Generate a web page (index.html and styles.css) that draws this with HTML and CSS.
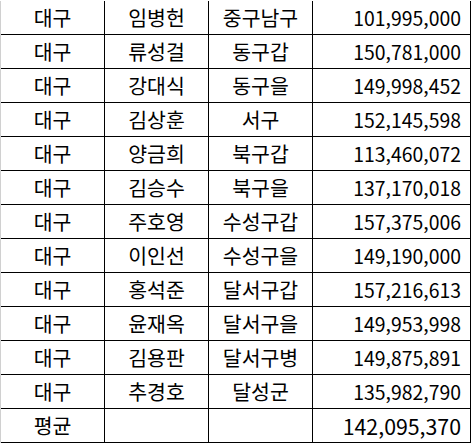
FILE: index.html
```html
<!DOCTYPE html>
<html lang="ko">
<head>
<meta charset="utf-8">
<link rel="stylesheet" href="styles.css">
</head>
<body>
<div class="sheet">
  <div class="c">대구</div><div class="c">임병헌</div><div class="c">중구남구</div><div class="n">101,995,000</div>
  <div class="c">대구</div><div class="c">류성걸</div><div class="c">동구갑</div><div class="n">150,781,000</div>
  <div class="c">대구</div><div class="c">강대식</div><div class="c">동구을</div><div class="n">149,998,452</div>
  <div class="c">대구</div><div class="c">김상훈</div><div class="c">서구</div><div class="n">152,145,598</div>
  <div class="c">대구</div><div class="c">양금희</div><div class="c">북구갑</div><div class="n">113,460,072</div>
  <div class="c">대구</div><div class="c">김승수</div><div class="c">북구을</div><div class="n">137,170,018</div>
  <div class="c">대구</div><div class="c">주호영</div><div class="c">수성구갑</div><div class="n">157,375,006</div>
  <div class="c">대구</div><div class="c">이인선</div><div class="c">수성구을</div><div class="n">149,190,000</div>
  <div class="c">대구</div><div class="c">홍석준</div><div class="c">달서구갑</div><div class="n">157,216,613</div>
  <div class="c">대구</div><div class="c">윤재옥</div><div class="c">달서구을</div><div class="n">149,953,998</div>
  <div class="c">대구</div><div class="c">김용판</div><div class="c">달서구병</div><div class="n">149,875,891</div>
  <div class="c">대구</div><div class="c">추경호</div><div class="c">달성군</div><div class="n">135,982,790</div>
  <div class="c">평균</div><div class="c"></div><div class="c"></div><div class="n big">142,095,370</div>
</div>
</body>
</html>
```
FILE: styles.css
```css
html, body {
  margin: 0;
  padding: 0;
  background: #fff;
}
body {
  padding-top: 1px;
}
.sheet {
  display: grid;
  grid-template-columns: 104px 104px 104px 158px;
  grid-auto-rows: 34px;
  width: 470px;
  border-left: 1px solid #d0d0d0;
  font-family: "Noto Sans CJK KR", "Noto Sans", sans-serif;
  font-size: 20.5px;
  color: #000;
}
.c, .n {
  box-sizing: border-box;
  border-right: 1px solid #000;
  border-bottom: 1px solid #000;
  display: flex;
  align-items: center;
  line-height: 1;
}
.c {
  justify-content: center;
}
.n {
  justify-content: flex-end;
  padding-right: 9px;
  font-size: 19.4px;
}
.n.big {
  font-size: 21.3px;
}
```
